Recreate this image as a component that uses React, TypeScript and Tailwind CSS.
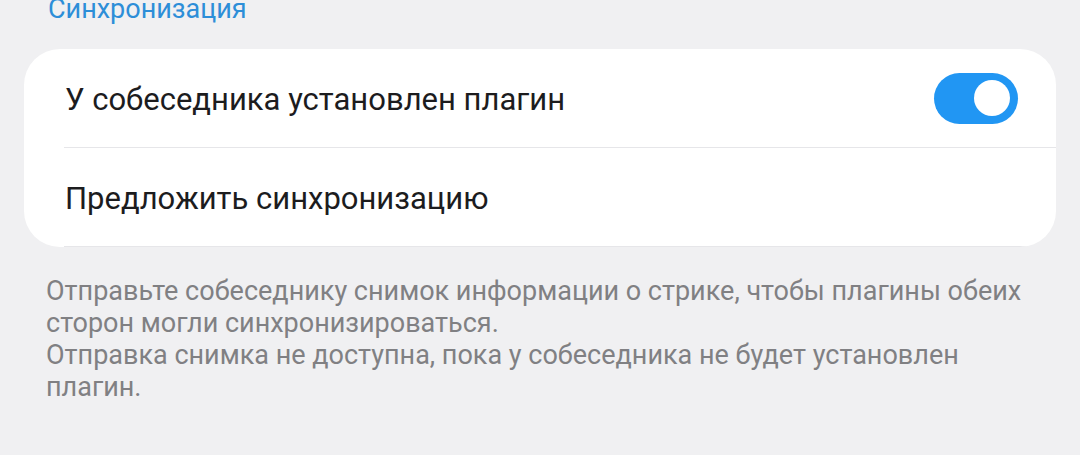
import React from "react";

function Toggle() {
  return (
    <div className="flex h-[51px] w-[84px] shrink-0 items-center justify-end rounded-full bg-[#2196f3] pr-[8px]">
      <div className="h-[36px] w-[36px] rounded-full bg-white" />
    </div>
  );
}

function Row({ label, right }: { label: string; right?: React.ReactNode }) {
  return (
    <div className="flex flex-col">
      <div className="flex h-[98px] items-center justify-between pl-[41px] pr-[38px]">
        <span className="pt-[2px] text-[31px] leading-none text-[#1c1c1e]">{label}</span>
        {right}
      </div>
      <div className="ml-[40px] h-[1px] bg-[#e6e6e9]" />
    </div>
  );
}

export default function App() {
  return (
    <div
      className="h-[455px] w-[1080px] overflow-hidden bg-[#f0f0f2]"
      style={{ fontFamily: "Roboto, 'Noto Sans', sans-serif" }}
    >
      <div className="mt-[-4px] pl-[48px] text-[27px] leading-[27px] text-[#2d8ed8]">Синхронизация</div>
      <div className="mx-[24px] mt-[26px] overflow-hidden rounded-[36px] bg-white">
        <Row label="У собеседника установлен плагин" right={<Toggle />} />
        <Row label="Предложить синхронизацию" />
      </div>
      <div className="mt-[28px] px-[46px] text-[27px] leading-[32px] text-[#808083]">
        Отправьте собеседнику снимок информации о стрике, чтобы плагины обеих
        <br />
        сторон могли синхронизироваться.
        <br />
        Отправка снимка не доступна, пока у собеседника не будет установлен
        <br />
        плагин.
      </div>
    </div>
  );
}
